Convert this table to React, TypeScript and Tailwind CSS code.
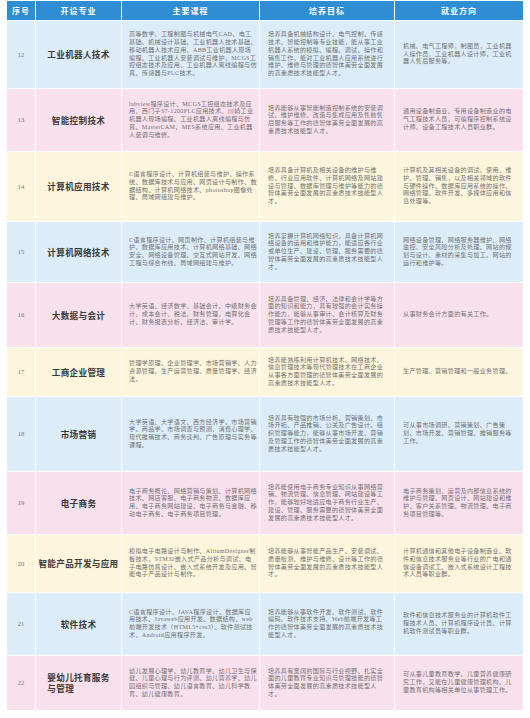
import React from "react";

type Tone = "blue" | "pink" | "yellow";

interface MajorRow {
  no: number;
  name: string[];
  tone: Tone;
  height: string;
  courses: string;
  goals: string;
  jobs: string;
}

const toneBg: Record<Tone, string> = {
  blue: "bg-[#dcecf8]",
  pink: "bg-[#f8e0ed]",
  yellow: "bg-[#fdf5dc]",
};

const rows: MajorRow[] = [
  {
    no: 12,
    name: ["工业机器人技术"],
    tone: "blue",
    height: "h-[67px]",
    courses:
      "高等数学、工程制图与机械电气CAD、电工基础、机械设计基础、工业机器人技术基础、移动机器人技术应用、ABB工业机器人现场编程、工业机器人安装调试与维护、MCGS工控组态技术及应用、工业机器人离线编程与仿真、传感器与PLC技术。",
    goals:
      "培养具备机械结构设计、电气控制、传感技术、智能控制等专业技能，能从事工业机器人系统的模拟、编程、调试、操作和销售工作，能对工业机器人应用系统进行维护、维修与管理的德智体美劳全面发展的高素质技术技能型人才。",
    jobs: "机械、电气工程师，制图员，工业机器人操作员，工业机器人设计师，工业机器人售后服务等。",
  },
  {
    no: 13,
    name: ["智能控制技术"],
    tone: "pink",
    height: "h-[62px]",
    courses:
      "labview程序设计、MCGS工控组态技术及应用、西门子S7-1200PLC应用技术、川崎工业机器人现场编程、工业机器人离线编程与仿真、MasterCAM、MES系统应用、工业机器人装调与维修。",
    goals:
      "培养能够从事智能制造控制系统的安装调试、维护维修、改造与集成应用及售前售后服务等工作的德智体美劳全面发展的高素质技术技能型人才。",
    jobs: "通用设备制造业、专用设备制造业的电气工程技术人员、可编程序控制系统设计师、设备工程技术人员职业群。",
  },
  {
    no: 14,
    name: ["计算机应用技术"],
    tone: "yellow",
    height: "h-[69px]",
    courses:
      "C语言程序设计、计算机组装与维护、操作系统、数据库技术与应用、网页设计与制作、数据结构、计算机网络技术、photoshop图像处理、局域网组建与维护。",
    goals:
      "培养具备计算机及相关设备的维护与维修、行业应用软件、计算机网络及网站建设与管理、数据库管理与维护等能力的德智体美劳全面发展的高素质技术技能型人才。",
    jobs: "计算机及其相关设备的调试、使用、维护、管理、销售，以及相关领域的软件与硬件操作、数据库应用系统的操作、网络管理、软件开发、多媒体应用和信息处理等。",
  },
  {
    no: 15,
    name: ["计算机网络技术"],
    tone: "blue",
    height: "h-[60px]",
    courses:
      "C语言程序设计、网页制作、计算机组装与维护、数据库应用技术、计算机网络基础、网络安全、网络设备管理、交互式网站开发、网络工程与综合布线、局域网组建与维护。",
    goals:
      "培养掌握计算机网络知识，具备计算机网络设备的运用和维护能力，能适应各行业或单位生产、建设、管理、服务需要的德智体美劳全面发展的高素质技术技能型人才。",
    jobs: "网络设备管理、网络服务器维护、网络监控、安全风险分析及处理、网站的规划与设计、素材的采集与加工、网站的运行和维护等。",
  },
  {
    no: 16,
    name: ["大数据与会计"],
    tone: "pink",
    height: "h-[64px]",
    courses:
      "大学英语、经济数学、基础会计、中级财务会计、成本会计、税法、财务管理、电算化会计、财务报表分析、经济法、审计学。",
    goals:
      "培养具备管理、经济、法律和会计学等方面的知识和能力，具有较强的会计实务操作能力，能够从事审计、会计核算及财务管理等工作的德智体美劳全面发展的高素质技术技能型人才。",
    jobs: "从事财务会计方面的有关工作。",
  },
  {
    no: 17,
    name: ["工商企业管理"],
    tone: "yellow",
    height: "h-[48px]",
    courses:
      "管理学原理、企业管理学、市场营销学、人力资源管理、生产运营管理、质量管理学、经济法。",
    goals:
      "培养能熟练利用计算机技术、网络技术、信息管理技术等现代管理技术在工商企业从事各方面管理的德智体美劳全面发展的高素质技术技能型人才。",
    jobs: "生产管理、营销管理和一般业务管理。",
  },
  {
    no: 18,
    name: ["市场营销"],
    tone: "blue",
    height: "h-[74px]",
    courses:
      "大学英语、大学语文、西方经济学、市场营销学、商品学、市场调查与预测、消费心理学、现代推销技术、商务谈判、广告原理与实务等课程。",
    goals:
      "培养具有较强的市场分析、营销策划、市场开拓、产品推销、公关及广告设计、组织管理等能力，能够从事市场开发、营销及管理工作的德智体美劳全面发展的高素质技术技能型人才。",
    jobs: "可从事市场调研、营销策划、广告策划、市场开发、营销管理、推销服务等工作。",
  },
  {
    no: 19,
    name: ["电子商务"],
    tone: "pink",
    height: "h-[62px]",
    courses:
      "电子商务概论、网络营销与策划、计算机网络技术、网店客服、电子商务物流、数据库应用、电子商务网站建设、电子商务与金融、移动电子商务、电子商务项目管理。",
    goals:
      "培养能使用电子商务专业知识从事网络营销、物流管理、信息管理、网站建设等工作，能够较好地适应电子商务行业生产、建设、管理、服务需要的德智体美劳全面发展的高素质技术技能型人才。",
    jobs: "电子商务策划、运营及内部信息系统的维护与管理、网页设计、网站建设和维护、客户关系管理、物流管理、电子商务项目管理等。",
  },
  {
    no: 20,
    name: ["智能产品开发与应用"],
    tone: "yellow",
    height: "h-[57px]",
    courses:
      "模拟电子电路设计与制作、AltiumDesigner制板技术、STM32嵌入式产品分析与调试、电子电路仿真设计、嵌入式系统开发及应用、智能电子产品设计与制作。",
    goals:
      "培养能够从事智能产品生产、安装调试、质量检测、维护与维修、设计等工作的德智体美劳全面发展的高素质技术技能型人才。",
    jobs: "计算机通信和其他电子设备制造业、软件和信息技术服务业等行业的广电和通信设备调试工、嵌入式系统设计工程技术人员等职业群。",
  },
  {
    no: 21,
    name: ["软件技术"],
    tone: "blue",
    height: "h-[62px]",
    courses:
      "C语言程序设计、JAVA程序设计、数据库应用技术、Javaweb应用开发、数据结构、web前端开发技术（HTML5+css3）、软件测试技术、Android应用程序开发。",
    goals:
      "培养能够从事软件开发、软件测试、软件编码、软件技术支持、Web前端开发等工作的德智体美劳全面发展的高素质技术技能型人才。",
    jobs: "软件和信息技术服务业的计算机软件工程技术人员、计算机程序设计员、计算机软件测试员等职业群。",
  },
  {
    no: 22,
    name: ["婴幼儿托育服务", "与管理"],
    tone: "pink",
    height: "h-[54px]",
    courses:
      "幼儿发展心理学、幼儿教育学、幼儿卫生与保健、儿童心理与行为评测、幼儿营养学、幼儿园组织与管理、幼儿语言教育、幼儿科学教育、幼儿健康教育。",
    goals:
      "培养具有宽阔的国际与行业视野、扎实全面的儿童教育专业知识与管理技能的德智体美劳全面发展的高素质技术技能型人才。",
    jobs: "可从事儿童教育教学、儿童营养健康研究工作，又能在儿童健康管理机构、儿童教育机构等相关单位从事管理工作。",
  },
];

const cols = "grid grid-cols-[28px_86px_138px_135px_129px]";
const bodyFont = "font-['Liberation_Serif','Noto_Sans_CJK_SC',serif]";
const cjkFont = "font-['Noto_Sans_CJK_SC',sans-serif]";

function TextCell({ text, pad }: { text: string; pad: string }) {
  return (
    <div className={`flex items-center border-l border-white ${pad}`}>
      <p
        className={`${bodyFont} text-[6.1px] leading-[7.7px] tracking-[0.3px] text-[#727272] break-all`}
      >
        {text}
      </p>
    </div>
  );
}

export default function App() {
  const headers = ["序号", "开设专业", "主要课程", "培养目标", "就业方向"];

  return (
    <div className="w-[530px] h-[718px] bg-white px-[7px] pt-[1px]">
      <div className="flex flex-col gap-[1px]">
        {/* header */}
        <div className={`${cols} h-[19px] bg-[#2f8dd3]`}>
          {headers.map((h, i) => (
            <div
              key={h}
              className={`flex items-center justify-center ${i > 0 ? "border-l border-white" : ""} ${cjkFont} text-[8px] font-bold tracking-[1px] text-white`}
            >
              {h}
            </div>
          ))}
        </div>

        {rows.map((row) => (
          <div key={row.no} className={`${cols} ${row.height} ${toneBg[row.tone]}`}>
            <div className={`flex items-center justify-center ${bodyFont} text-[6.5px] text-[#777]`}>
              {row.no}
            </div>
            <div className="flex items-center justify-center border-l border-white">
              <div
                className={`${cjkFont} text-[8.6px] leading-[11px] font-bold tracking-[0.3px] text-[#3a3a3a] text-left`}
              >
                {row.name.map((n) => (
                  <div key={n}>{n}</div>
                ))}
              </div>
            </div>
            <TextCell text={row.courses} pad="pl-[7px] pr-[1.8px]" />
            <TextCell text={row.goals} pad="pl-[8px] pr-[8px]" />
            <TextCell text={row.jobs} pad="pl-[8px] pr-[8px]" />
          </div>
        ))}
      </div>
    </div>
  );
}
